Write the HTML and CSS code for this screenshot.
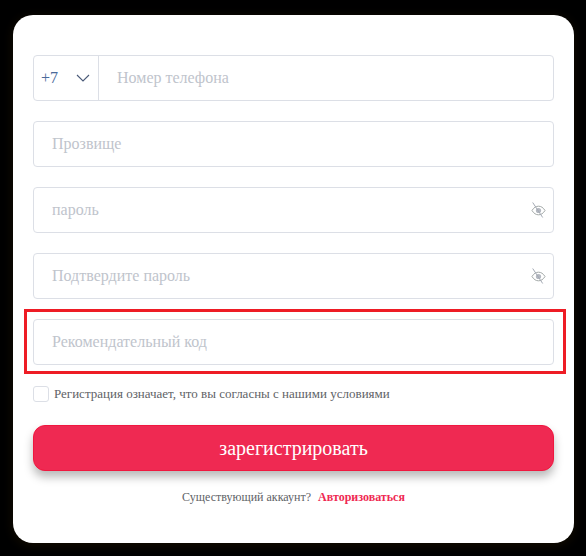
FILE: index.html
```html
<!DOCTYPE html>
<html lang="ru">
<head>
<meta charset="utf-8">
<title>Регистрация</title>
<link rel="stylesheet" href="styles.css">
</head>
<body>
<main class="card">
  <form class="form">
    <div class="field phone">
      <div class="code"><span class="code-value">+7</span>
        <svg class="chevron" viewBox="0 0 14 8" width="14" height="8"><path d="M1 1l6 6 6-6" fill="none" stroke="#4a5a78" stroke-width="1.1"/></svg>
      </div>
      <input class="control" placeholder="Номер телефона">
    </div>
    <div class="field"><input class="control" placeholder="Прозвище"></div>
    <div class="field">
      <input class="control" placeholder="пароль">
      <svg class="eye" viewBox="0 0 16 16" width="16" height="16"><path d="M2 8.500C3.800 5.500 6 4.200 8.500 4.200s4.700 1.300 6.500 4.300c-1.800 3-4 4.300-6.500 4.300S3.800 11.500 2 8.500z" fill="none" stroke="#a3a9a8" stroke-width="1"/><circle cx="8.500" cy="8.500" r="2.600" fill="#b4b8c0"/><path d="M2.700.5l10 15" stroke="#a3a9b4" stroke-width="1"/></svg>
    </div>
    <div class="field">
      <input class="control" placeholder="Подтвердите пароль">
      <svg class="eye" viewBox="0 0 16 16" width="16" height="16"><path d="M2 8.500C3.800 5.500 6 4.200 8.500 4.200s4.700 1.300 6.500 4.300c-1.800 3-4 4.300-6.500 4.300S3.800 11.500 2 8.500z" fill="none" stroke="#a3a9a8" stroke-width="1"/><circle cx="8.500" cy="8.500" r="2.600" fill="#b4b8c0"/><path d="M2.700.5l10 15" stroke="#a3a9b4" stroke-width="1"/></svg>
    </div>
    <div class="field highlighted">
      <input class="control" placeholder="Рекомендательный код">
    </div>
    <label class="terms"><span class="box"></span><span>Регистрация означает, что вы согласны с нашими условиями</span></label>
    <button class="submit" type="button">зарегистрировать</button>
    <p class="login">Существующий аккаунт? <a class="login-link">Авторизоваться</a></p>
  </form>
</main>
</body>
</html>
```
FILE: styles.css
```css
*, *::after { box-sizing: border-box; }
html, body { margin: 0; height: 100%; background: #000; }
body { font-family: "Liberation Serif", serif; overflow: hidden; }
.card {
  width: 561px;
  height: 528px;
  margin: 15px 0 0 13px;
  padding: 40px 20px 0;
  background: #fff;
  border-radius: 20px;
  box-shadow: 0 2px 12px rgba(70, 45, 0, .3);
}
.form { display: flex; flex-direction: column; }
.field {
  position: relative;
  display: flex;
  align-items: center;
  width: 521px;
  height: 46px;
  margin-bottom: 20px;
  border: 1px solid #dcdfe6;
  border-radius: 4px;
}
.control {
  flex: 1;
  min-width: 0;
  height: 100%;
  padding: 0 18px;
  border: 0;
  outline: 0;
  background: transparent;
  font: 16px "Liberation Serif", serif;
}
.control::placeholder { color: #c0c4cc; opacity: 1; }
.code {
  display: flex;
  align-items: center;
  justify-content: space-between;
  flex: none;
  width: 65px;
  height: 100%;
  padding: 0 7px;
  border-right: 1px solid #dcdfe6;
  color: #4a6a9a;
  font-size: 16px;
}
.chevron { margin-right: 1px; }
.eye { position: absolute; right: 7px; top: 14px; }
.highlighted::after {
  content: "";
  position: absolute;
  left: -10px;
  top: -11px;
  width: 542px;
  height: 65px;
  border: 3px solid #ee1c25;
  pointer-events: none;
}
.terms {
  display: flex;
  align-items: center;
  gap: 5px;
  height: 16px;
  margin-top: 1px;
  color: #606266;
  font-size: 13px;
}
.box {
  flex: none;
  width: 16px;
  height: 16px;
  border: 1px solid #dcdfe6;
  border-radius: 3px;
}
.submit {
  width: 521px;
  height: 46px;
  margin-top: 23px;
  border: 1px solid #f0173f;
  border-radius: 12px;
  background: #ef2952;
  box-shadow: 0 6px 10px rgba(0, 0, 0, .28);
  color: #fff;
  font: 20px "Liberation Serif", serif;
}
.login {
  margin: 19px 0 0;
  text-align: center;
  color: #606266;
  font-size: 12px;
}
.login-link { margin-left: 4px; color: #ef2952; font-weight: 700; }
```
